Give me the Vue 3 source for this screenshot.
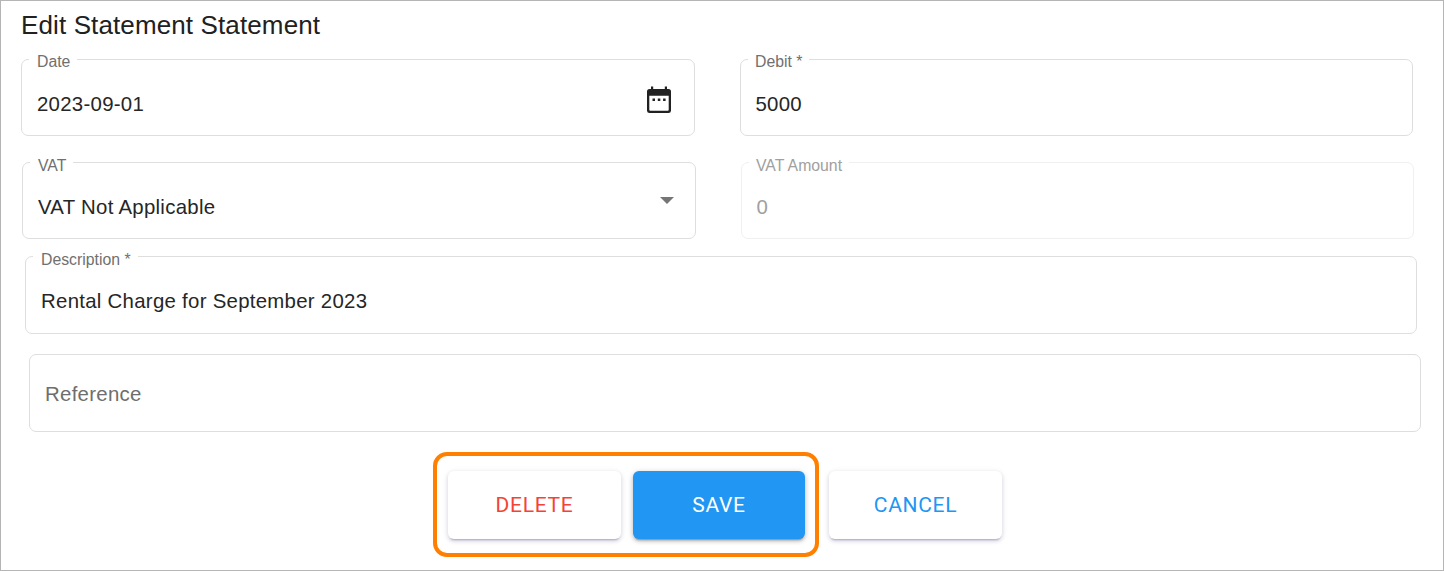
<script setup>
import { reactive } from "vue";

const emit = defineEmits(["delete", "save", "cancel"]);

const form = reactive({
  date: "2023-09-01",
  debit: "5000",
  vat: "VAT Not Applicable",
  vatAmount: "0",
  description: "Rental Charge for September 2023",
  reference: "",
});
</script>

<template>
  <div class="page">
    <h2 class="title">Edit Statement Statement</h2>

    <div class="row row-first">
      <div class="field">
        <label>Date</label>
        <input type="text" v-model="form.date" />
        <svg class="calendar" width="24" height="27" viewBox="0 0 24 27">
          <path fill="#212121" fill-rule="evenodd" d="M4 .5h2.2v2.5h11.6V.5H20v2.500h1.500A2.500 2.500 0 0 1 24 5.500v19.200a2.500 2.500 0 0 1-2.500 2.300h-19A2.500 2.500 0 0 1 0 24.700V5.500A2.500 2.500 0 0 1 2.500 3H4ZM2.300 9.800v14a.9.9 0 0 0 .9.9h17.600a.9.9 0 0 0 .9-.9V9.800Z" />
          <path fill="#212121" d="M5.500 12.600h2.500v2.500H5.500zM10.800 12.600h2.500v2.500h-2.500zM16.100 12.600h2.500v2.500h-2.500z" />
        </svg>
      </div>
      <div class="field right">
        <label>Debit *</label>
        <input type="text" v-model="form.debit" />
      </div>
    </div>

    <div class="row row-vat">
      <div class="field">
        <label>VAT</label>
        <input type="text" v-model="form.vat" readonly />
        <span class="arrow"></span>
      </div>
      <div class="field right disabled">
        <label>VAT Amount</label>
        <input type="text" v-model="form.vatAmount" disabled />
      </div>
    </div>

    <div class="field description">
      <label>Description *</label>
      <input type="text" v-model="form.description" />
    </div>

    <div class="field reference">
      <input type="text" v-model="form.reference" placeholder="Reference" />
    </div>

    <div class="actions">
      <div class="highlight">
        <button class="delete" @click="emit('delete')">DELETE</button>
        <button class="save" @click="emit('save', { ...form })">SAVE</button>
      </div>
      <button class="cancel" @click="emit('cancel')">CANCEL</button>
    </div>
  </div>
</template>

<style>
body {
  margin: 0;
  background-color: #fff;
}
</style>

<style scoped>
.page {
  width: 1444px;
  height: 571px;
  box-sizing: border-box;
  border: 1px solid #b5b5b5;
  overflow: hidden;
  font-family: "Liberation Sans", Arial, sans-serif;
  color: #212121;
}

.title {
  height: 48px;
  margin: 0 0 10px 20px;
  font-size: 26px;
  font-weight: 400;
  line-height: 48px;
  letter-spacing: 0.12px;
}

.row {
  display: grid;
  grid-template-columns: 674px 673px;
  column-gap: 45px;
}

.row-first {
  margin-left: 20px;
}

.row-vat {
  margin: 26px 0 0 21px;
}

.field {
  position: relative;
  display: flex;
  height: 77px;
  box-sizing: border-box;
  border: 1px solid #dedede;
  border-radius: 7px;
}

.field label {
  position: absolute;
  top: -7px;
  left: 7px;
  padding: 0 7px 0 8px;
  background-color: #fff;
  color: #707070;
  font-size: 15.8px;
  line-height: 20px;
  white-space: nowrap;
}

.row-first .field label {
  top: -8px;
}

.field input {
  flex: 1;
  min-width: 0;
  padding: 14px 15px 0;
  border: none;
  outline: none;
  background: transparent;
  color: #262626;
  font-family: inherit;
  font-size: 20.4px;
  letter-spacing: 0.28px;
}

.field.right label {
  padding-left: 7px;
}

.field.right input {
  padding-left: 14.5px;
}

.field input::placeholder {
  color: #6e6e6e;
  opacity: 1;
}

.field.disabled {
  border-color: #f0f0f0;
}

.field.disabled label,
.field.disabled input {
  color: #a0a0a0;
}

.description {
  width: 1392px;
  height: 78px;
  margin: 17px 0 0 24px;
}

.description input {
  padding-top: 12px;
}

.reference {
  width: 1392px;
  height: 78px;
  margin: 20px 0 0 28px;
}

.reference input {
  padding-top: 2px;
}

.calendar {
  margin: 26px 23px 0 0;
}

.arrow {
  width: 0;
  height: 0;
  margin: 34px 21px 0 0;
  border-left: 7px solid transparent;
  border-right: 7px solid transparent;
  border-top: 7px solid #757575;
}

.actions {
  display: flex;
  align-items: flex-start;
  gap: 10px;
  margin: 20px 0 0 432px;
}

.highlight {
  display: flex;
  gap: 12px;
  width: 386px;
  height: 105px;
  box-sizing: border-box;
  padding: 15px 10px 0 11px;
  border: 4px solid #ff8000;
  border-radius: 14px;
}

button {
  width: 173px;
  height: 68px;
  padding: 0;
  border: none;
  border-radius: 6px;
  background-color: #fff;
  box-shadow: 0 3px 2px -2px rgba(30, 20, 90, 0.25), 0 2px 4px rgba(30, 20, 90, 0.14), 0 1px 7px rgba(30, 20, 90, 0.08);
  font-family: Roboto, sans-serif;
  font-size: 21px;
  font-weight: 400;
  letter-spacing: 0.7px;
}

.delete {
  color: #f44336;
}

.save {
  width: 172px;
  background-color: #2196f3;
  box-shadow: 0 3px 2px -2px rgba(0, 0, 0, 0.3), 0 2px 4px rgba(0, 0, 0, 0.2), 0 1px 7px rgba(0, 0, 0, 0.12);
  color: #fff;
}

.cancel {
  margin-top: 19px;
  color: #2196f3;
}
</style>
